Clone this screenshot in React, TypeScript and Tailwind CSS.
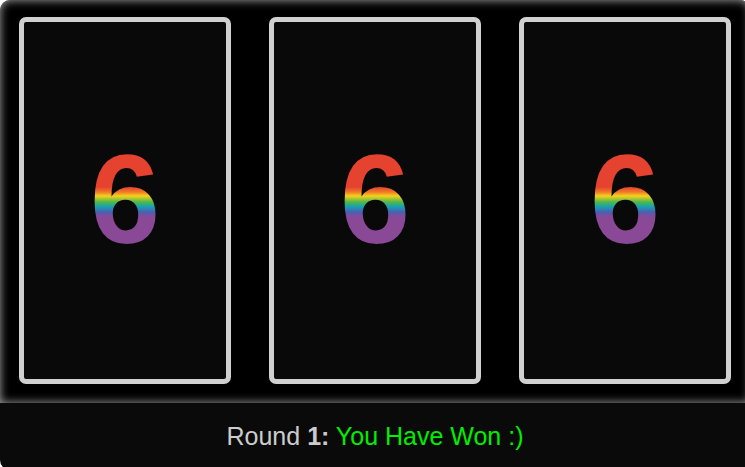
import React from "react";

const Card = () => (
  <div className="w-[212px] h-[367px] rounded-[7px] border-[5px] border-[#d0d0d0] bg-[#090909] flex items-center justify-center">
    <span className="inline-block text-[126px] leading-none font-bold font-['Liberation_Sans',Arial,sans-serif] text-transparent bg-clip-text bg-[linear-gradient(to_bottom,#e5422f_0px,#e5422f_50px,#ef7a26_55px,#f6d11c_59px,#4fb84a_65px,#169fb4_70px,#4b5fb2_75px,#8a4997_80px,#8a4997_128px)] -mt-[2px]">
      6
    </span>
  </div>
);

export default function App() {
  return (
    <div className="w-[745px] h-[467px] overflow-hidden bg-white">
      <div className="w-[750px] font-['Liberation_Sans',Arial,sans-serif]">
        <div className="h-[403px] bg-black rounded-t-[10px] shadow-[inset_0_0_10px_#aaa] pt-[17px] pl-[19px] flex gap-[38px]">
          <Card />
          <Card />
          <Card />
        </div>
        <div className="h-[67px] bg-[#0a0a0a] rounded-b-[10px] flex items-center justify-center text-[25px] text-[#cccccc]">
          <span>
            Round <b className="font-bold">1:</b>{" "}
            <span className="text-[#00ee00]">You Have Won :)</span>
          </span>
        </div>
      </div>
    </div>
  );
}
